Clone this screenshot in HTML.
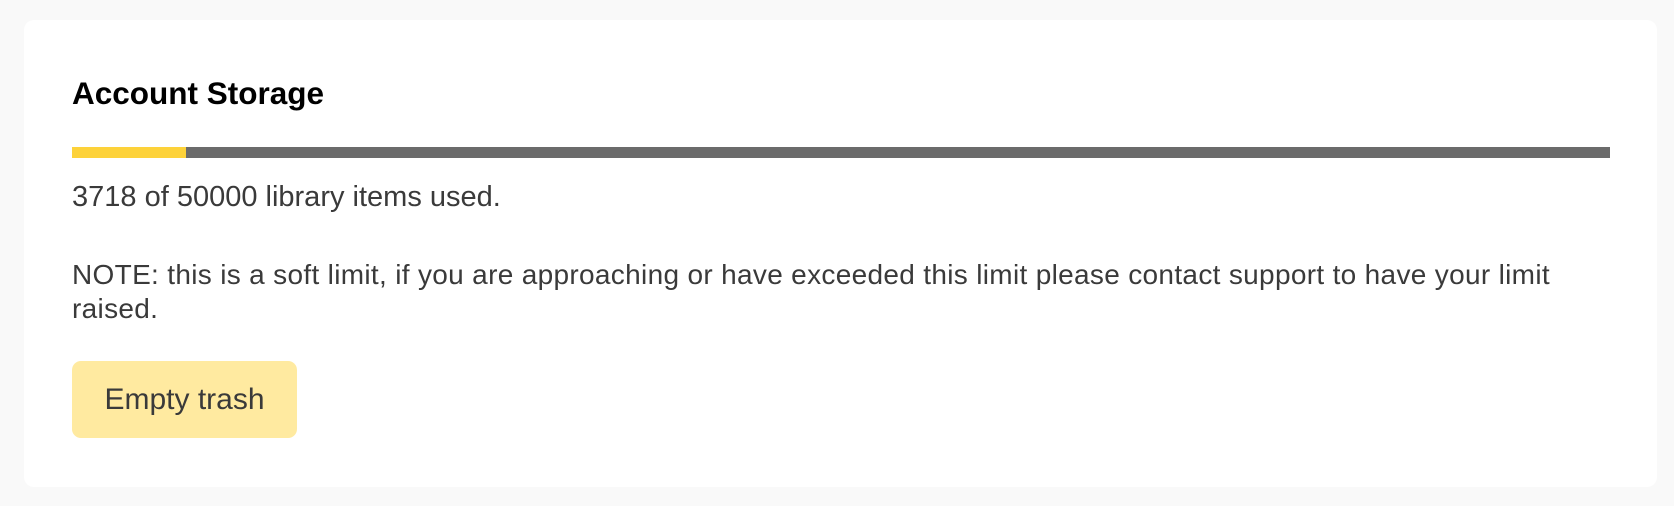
<!DOCTYPE html>
<html><head><style>
html,body{margin:0;padding:0;background:#f9f9f9;width:1674px;height:506px;overflow:hidden;font-family:"Liberation Sans",sans-serif;}
.card{position:absolute;left:24px;top:20px;width:1633px;height:467px;background:#fff;border-radius:10px;}
h2{position:absolute;left:72px;top:74px;margin:0;font-size:31.5px;font-weight:bold;color:#000;line-height:38px;}
.bar{position:absolute;left:72px;top:147px;width:1538px;height:11px;background:#6b6b6b;}
.bar div{width:114px;height:11px;background:#fdd23a;}
.t{position:absolute;left:72px;color:#3a3a3a;font-size:28px;line-height:34px;letter-spacing:0.32px;white-space:nowrap;}
.btn{position:absolute;left:72px;top:361px;width:225px;height:77px;background:#ffeaa0;border-radius:9px;color:#3a3a3a;font-size:30px;line-height:77px;text-align:center;}
</style></head><body>
<div class="card"></div>
<h2>Account Storage</h2>
<div class="bar"><div></div></div>
<div class="t" style="top:180px;font-size:29px;letter-spacing:0">3718 of 50000 library items used.</div>
<div class="t" style="top:258px">NOTE: this is a soft limit, if you are approaching or have exceeded this limit please contact support to have your limit<br>raised.</div>
<div class="btn">Empty trash</div>
</body></html>
